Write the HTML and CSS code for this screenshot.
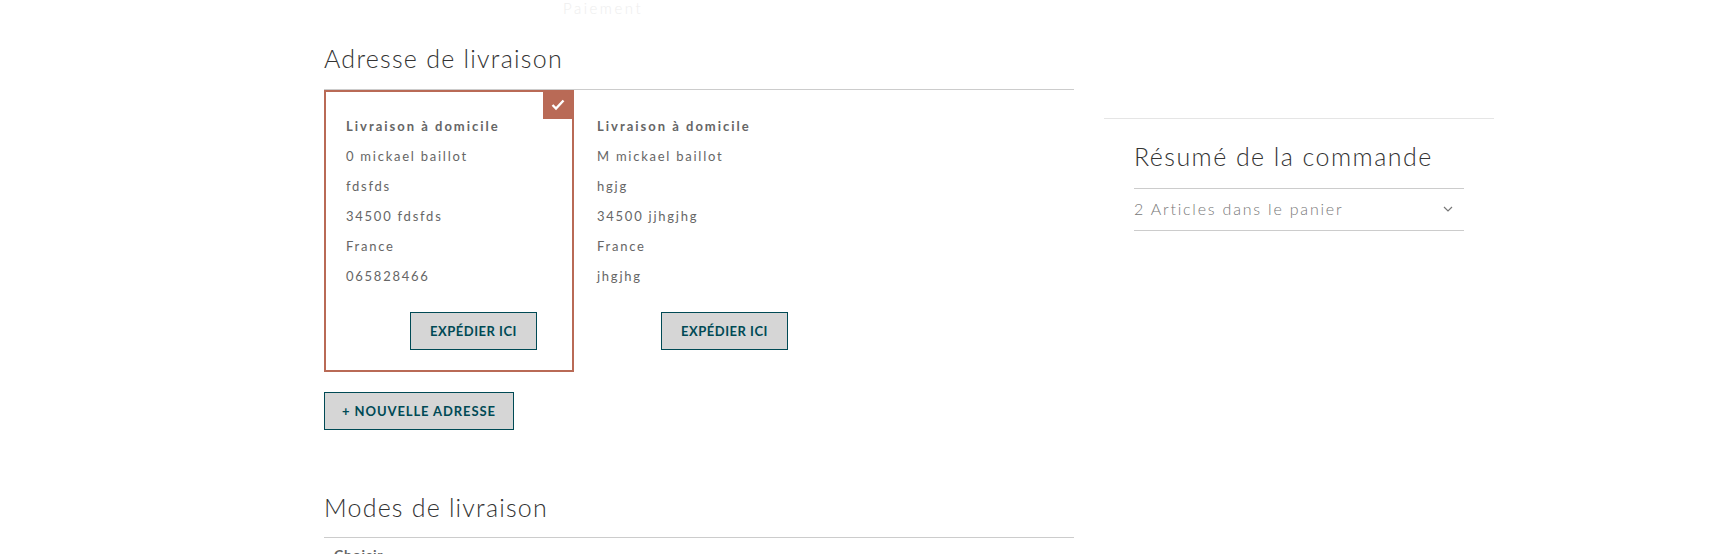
FILE: index.html
```html
<!doctype html>
<html lang="fr">
<head>
<meta charset="utf-8">
<title>Adresse de livraison</title>
<link rel="stylesheet" href="styles.css">
</head>
<body>
<div class="page">
  <main class="main">
    <div class="step">Paiement</div>
    <h2 class="title">Adresse de livraison</h2>
    <div class="cards">
      <div class="card selected">
        <span class="tick">
          <svg width="14" height="12" viewBox="0 0 14 12"><path d="M1.5 6l3.5 3.5 7.5-8" fill="none" stroke="#fff" stroke-width="2.4"/></svg>
        </span>
        <p class="name">Livraison à domicile</p>
        <p>0 mickael baillot</p>
        <p>fdsfds</p>
        <p>34500 fdsfds</p>
        <p>France</p>
        <p>065828466</p>
        <div class="card-foot"><a class="btn">EXPÉDIER ICI</a></div>
      </div>
      <div class="card">
        <p class="name">Livraison à domicile</p>
        <p>M mickael baillot</p>
        <p>hgjg</p>
        <p>34500 jjhgjhg</p>
        <p>France</p>
        <p>jhgjhg</p>
        <div class="card-foot"><a class="btn">EXPÉDIER ICI</a></div>
      </div>
    </div>
    <a class="btn btn-new">+ NOUVELLE ADRESSE</a>
    <h2 class="title title-modes">Modes de livraison</h2>
    <div class="choose">Choisir</div>
  </main>
  <aside class="side">
    <div class="side-inner">
      <h2 class="side-title">Résumé de la commande</h2>
      <div class="cart-row">
        <span>2 Articles dans le panier</span>
        <svg width="10" height="6" viewBox="0 0 10 6"><path d="M1 1l4 4 4-4" fill="none" stroke="#777" stroke-width="1.2"/></svg>
      </div>
    </div>
  </aside>
</div>
</body>
</html>
```

FILE: styles.css
```css
html, body {
  margin: 0;
  height: 554px;
  overflow: hidden;
  background: #fff;
}
body {
  font-family: "Lato", "Liberation Sans", sans-serif;
  color: #333;
}
p, h2 {
  margin: 0;
}

.page {
  display: flex;
  padding-left: 324px;
  gap: 30px;
}
.main {
  width: 750px;
}

.step {
  height: 16px;
  line-height: 16px;
  padding-left: 239px;
  font-size: 15px;
  letter-spacing: 2.5px;
  font-weight: 300;
  color: #eee;
}

.title {
  height: 74px;
  padding-top: 25px;
  box-sizing: border-box;
  line-height: 34px;
  font-size: 25px;
  font-weight: 300;
  letter-spacing: 1.25px;
  color: #333;
  border-bottom: 1px solid #ccc;
}

.cards {
  display: flex;
}
.card {
  position: relative;
  width: 250px;
  height: 282px;
  box-sizing: border-box;
  padding: 19px 0 0 21px;
  border: 2px solid transparent;
  font-size: 13px;
  letter-spacing: 1.75px;
  color: #666;
}
.card p {
  height: 30px;
  line-height: 30px;
}
.card .name {
  font-weight: 700;
  letter-spacing: 2px;
}
.card.selected {
  border-color: #b96a56;
  padding-left: 20px;
}
.tick {
  position: absolute;
  top: -2px;
  right: 0;
  width: 29px;
  height: 29px;
  background: #b96a56;
  display: flex;
  align-items: center;
  justify-content: center;
}
.card-foot {
  display: flex;
  margin-top: 21px;
  padding-left: 64px;
}

.btn {
  display: inline-block;
  box-sizing: border-box;
  height: 38px;
  line-height: 36px;
  white-space: nowrap;
  background: #d6d6d6;
  border: 1px solid #004a55;
  color: #004a55;
  font-size: 13px;
  font-weight: 700;
  letter-spacing: 0.5px;
  text-align: center;
}
.card-foot .btn {
  width: 127px;
}
.btn-new {
  width: 190px;
  margin-top: 20px;
  letter-spacing: 0.9px;
}

.title-modes {
  height: 108px;
  padding-top: 60px;
  letter-spacing: 1.2px;
}
.choose {
  padding-left: 10px;
  margin-top: 8px;
  font-size: 14px;
  font-weight: 700;
  letter-spacing: 0.8px;
  color: #666;
}

.side {
  width: 390px;
  margin-top: 118px;
  border-top: 1px solid #e5e5e5;
  box-sizing: border-box;
  padding: 0 30px;
}
.side-title {
  height: 70px;
  box-sizing: border-box;
  padding-top: 20px;
  line-height: 34px;
  font-size: 25px;
  font-weight: 300;
  letter-spacing: 1.45px;
  color: #333;
  border-bottom: 1px solid #ccc;
}
.cart-row {
  display: flex;
  align-items: center;
  justify-content: space-between;
  box-sizing: border-box;
  height: 42px;
  padding: 0 11px 2px 0;
  border-bottom: 1px solid #ccc;
  font-size: 16px;
  font-weight: 300;
  letter-spacing: 1.8px;
  color: #777;
}
```
